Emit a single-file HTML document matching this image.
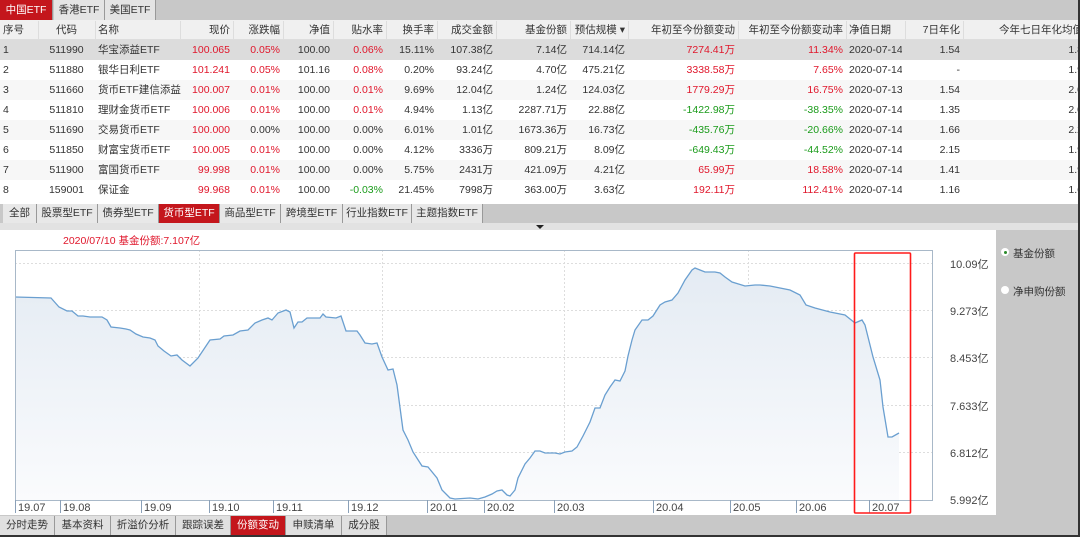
<!DOCTYPE html><html><head><meta charset="utf-8"><style>
*{margin:0;padding:0;box-sizing:border-box}
body{width:1080px;height:537px;overflow:hidden;background:#c8c8c8;font-family:"Liberation Sans","Noto Sans CJK SC",sans-serif;font-size:10.5px;color:#333;position:relative}
.a{position:absolute}
.tab{position:absolute;top:0;height:20px;line-height:20px;text-align:center;background:#e4e4e4;border-right:1px solid #999;font-size:10.5px}
.hdr{position:absolute;top:20px;left:0;width:1080px;height:20px;background:#f0f0f0;border-bottom:1px solid #ddd}
.c{position:absolute;height:20px;line-height:20px;white-space:nowrap;overflow:hidden}
.r{color:#e0162b}.g{color:#1a9b1a}
.row{position:absolute;left:0;width:1080px;height:20px}
.t2{position:absolute;top:204px;height:19px;line-height:19px;text-align:center;background:#e8e8e8;border-right:1px solid #999;font-size:10.5px}
.t3{position:absolute;top:516px;height:19px;line-height:19px;text-align:center;background:#e0e0e0;border-right:1px solid #999;font-size:10.5px}
.sel{background:#c4161c!important;color:#fff}
</style></head><body>
<div class="tab sel" style="left:0;width:53px">中国ETF</div>
<div class="tab" style="left:54px;width:51px">香港ETF</div>
<div class="tab" style="left:105px;width:51px">美国ETF</div>
<div class="hdr"></div>
<div class="a" style="left:0;top:40px;width:1080px;height:164px;background:#fff"></div>
<div class="row" style="top:40px;background:#dcdcdc"></div>
<div class="row" style="top:80px;background:#f7f7f7"></div>
<div class="row" style="top:120px;background:#f7f7f7"></div>
<div class="row" style="top:160px;background:#f7f7f7"></div>
<div id="tbl"></div>
<div class="a" style="left:0;top:204px;width:1080px;height:19px;background:#c8c8c8"></div>
<div class="a" style="left:0;top:223px;width:1080px;height:7px;background:#e2e2e2"></div>
<div class="a" style="left:536px;top:225px;width:0;height:0;border-left:4px solid transparent;border-right:4px solid transparent;border-top:4px solid #222"></div>
<div class="t2" style="left:3px;width:34px">全部</div>
<div class="t2" style="left:37px;width:61px">股票型ETF</div>
<div class="t2" style="left:98px;width:61px">债券型ETF</div>
<div class="t2 sel" style="left:159px;width:61px">货币型ETF</div>
<div class="t2" style="left:220px;width:61px">商品型ETF</div>
<div class="t2" style="left:281px;width:62px">跨境型ETF</div>
<div class="t2" style="left:343px;width:69px">行业指数ETF</div>
<div class="t2" style="left:412px;width:71px">主题指数ETF</div>
<div class="a" style="left:0;top:230px;width:996px;height:285px;background:#fff"></div>
<div class="a r" style="left:63px;top:233px;font-size:10.5px">2020/07/10 基金份额:7.107亿</div>
<svg class="a" style="left:0;top:230px" width="996" height="285" viewBox="0 230 996 285">
<defs><linearGradient id="gf" x1="0" y1="0" x2="0" y2="1"><stop offset="0" stop-color="#e4ebf3"/><stop offset="1" stop-color="#fafbfd"/></linearGradient></defs>
<g stroke="#ddd" stroke-dasharray="2,2" stroke-width="1">
<line x1="15" y1="263.5" x2="932" y2="263.5"/><line x1="15" y1="310.5" x2="932" y2="310.5"/><line x1="15" y1="357.5" x2="932" y2="357.5"/><line x1="15" y1="405.5" x2="932" y2="405.5"/><line x1="15" y1="452.5" x2="932" y2="452.5"/>
<line x1="199.5" y1="250" x2="199.5" y2="500"/><line x1="382.5" y1="250" x2="382.5" y2="500"/><line x1="564.5" y1="250" x2="564.5" y2="500"/><line x1="748.5" y1="250" x2="748.5" y2="500"/>
</g>
<path fill="url(#gf)" d="M15,297 L51,298 59,307 67,311 72,311 78,316 83,316 90,317 102,317 107,320 111,327 120,328 126,329 130,330 136,334 143,337 150,338 155,340 158,346 164,351 171,356 177,355 182,360 190,366 198,358 210,340 220,339 224,336 233,335 240,331 248,330 255,323 262,320 268,318 272,320 278,313 286,310 290,312 294,328 298,322 302,322 307,318 312,318 320,318 323,314 326,317 336,318 341,316 346,331 353,331 357,331 360,335 365,343 372,344 377,343 382,357 388,370 393,369 397,385 403,430 408,440 413,452 422,466 428,467 437,478 442,490 450,498 455,499 470,498 478,499 485,497 492,494 497,491 502,490 507,495 510,496 515,490 518,478 525,464 530,458 535,451 540,451 545,453 555,453 560,454 565,452 572,451 577,447 583,436 590,422 595,408 600,408 605,395 610,387 615,380 620,381 625,371 628,356 632,340 635,330 642,320 648,320 653,316 660,305 665,302 672,300 678,293 685,280 692,270 695,268 700,270 705,272 715,272 720,273 725,277 732,282 745,286 755,285 760,285 770,286 790,290 800,295 806,305 815,308 830,312 845,315 855,323 862,320 865,325 873,357 880,380 883,407 888,437 892,437 899,433 L899,500 L15,500Z"/>
<path fill="none" stroke="#6a9fd0" stroke-width="1.3" d="M15,297 L51,298 59,307 67,311 72,311 78,316 83,316 90,317 102,317 107,320 111,327 120,328 126,329 130,330 136,334 143,337 150,338 155,340 158,346 164,351 171,356 177,355 182,360 190,366 198,358 210,340 220,339 224,336 233,335 240,331 248,330 255,323 262,320 268,318 272,320 278,313 286,310 290,312 294,328 298,322 302,322 307,318 312,318 320,318 323,314 326,317 336,318 341,316 346,331 353,331 357,331 360,335 365,343 372,344 377,343 382,357 388,370 393,369 397,385 403,430 408,440 413,452 422,466 428,467 437,478 442,490 450,498 455,499 470,498 478,499 485,497 492,494 497,491 502,490 507,495 510,496 515,490 518,478 525,464 530,458 535,451 540,451 545,453 555,453 560,454 565,452 572,451 577,447 583,436 590,422 595,408 600,408 605,395 610,387 615,380 620,381 625,371 628,356 632,340 635,330 642,320 648,320 653,316 660,305 665,302 672,300 678,293 685,280 692,270 695,268 700,270 705,272 715,272 720,273 725,277 732,282 745,286 755,285 760,285 770,286 790,290 800,295 806,305 815,308 830,312 845,315 855,323 862,320 865,325 873,357 880,380 883,407 888,437 892,437 899,433"/>
<rect x="15.5" y="250.5" width="917" height="250" fill="none" stroke="#a8b8c8"/>
<g stroke="#8aa0b8"><line x1="15.5" y1="500" x2="15.5" y2="513"/><line x1="60.5" y1="500" x2="60.5" y2="513"/><line x1="141.5" y1="500" x2="141.5" y2="513"/><line x1="209.5" y1="500" x2="209.5" y2="513"/><line x1="273.5" y1="500" x2="273.5" y2="513"/><line x1="348.5" y1="500" x2="348.5" y2="513"/><line x1="427.5" y1="500" x2="427.5" y2="513"/><line x1="484.5" y1="500" x2="484.5" y2="513"/><line x1="554.5" y1="500" x2="554.5" y2="513"/><line x1="653.5" y1="500" x2="653.5" y2="513"/><line x1="730.5" y1="500" x2="730.5" y2="513"/><line x1="796.5" y1="500" x2="796.5" y2="513"/><line x1="869.5" y1="500" x2="869.5" y2="513"/></g>
<g font-family="Liberation Sans" font-size="11" fill="#444">
<text x="18" y="511">19.07</text><text x="63" y="511">19.08</text><text x="144" y="511">19.09</text><text x="212" y="511">19.10</text><text x="276" y="511">19.11</text><text x="351" y="511">19.12</text><text x="430" y="511">20.01</text><text x="487" y="511">20.02</text><text x="557" y="511">20.03</text><text x="656" y="511">20.04</text><text x="733" y="511">20.05</text><text x="799" y="511">20.06</text><text x="872" y="511">20.07</text>
</g>
<g font-family="Liberation Sans,Noto Sans CJK SC" font-size="11" fill="#444">
<text x="950" y="268">10.09亿</text><text x="950" y="315">9.273亿</text><text x="950" y="362">8.453亿</text><text x="950" y="410">7.633亿</text><text x="950" y="457">6.812亿</text><text x="950" y="504">5.992亿</text>
</g>
<rect x="854.5" y="253" width="56" height="260" rx="1" fill="none" stroke="#ff1a1a" stroke-width="1.6"/>
</svg>
<div class="a" style="left:1001px;top:248px;width:8px;height:8px;border-radius:50%;background:#fff"></div>
<div class="a" style="left:1003.5px;top:250.5px;width:3px;height:3px;border-radius:50%;background:#2a8a2a"></div>
<div class="a" style="left:1013px;top:246px">基金份额</div>
<div class="a" style="left:1001px;top:286px;width:8px;height:8px;border-radius:50%;background:#fff"></div>
<div class="a" style="left:1013px;top:284px">净申购份额</div>
<div class="t3" style="left:0;width:55px">分时走势</div>
<div class="t3" style="left:55px;width:56px">基本资料</div>
<div class="t3" style="left:111px;width:65px">折溢价分析</div>
<div class="t3" style="left:176px;width:55px">跟踪误差</div>
<div class="t3 sel" style="left:231px;width:55px">份额变动</div>
<div class="t3" style="left:286px;width:56px">申赎清单</div>
<div class="t3" style="left:342px;width:45px">成分股</div>
<div class="a" style="left:0;top:535px;width:1080px;height:2px;background:#333"></div>
<div class="a" style="left:1078px;top:0;width:2px;height:537px;background:#333"></div>
<script>
var cols=[[0,38,'l'],[38,95,'c'],[95,180,'l'],[180,233,'r'],[233,283,'r'],[283,333,'r'],[333,386,'r'],[386,437,'r'],[437,496,'r'],[496,570,'r'],[570,628,'r'],[628,738,'r'],[738,846,'r'],[846,905,'l'],[905,963,'r'],[963,1086,'r']];
var H=['序号','代码','名称','现价','涨跌幅','净值','贴水率','换手率','成交金额','基金份额','预估规模 ▾','年初至今份额变动','年初至今份额变动率','净值日期','7日年化','今年七日年化均值'];
var D=[
['1','511990','华宝添益ETF','r100.065','r0.05%','100.00','r0.06%','15.11%','107.38亿','7.14亿','714.14亿','r7274.41万','r11.34%','2020-07-14','1.54','1.8'],
['2','511880','银华日利ETF','r101.241','r0.05%','101.16','r0.08%','0.20%','93.24亿','4.70亿','475.21亿','r3338.58万','r7.65%','2020-07-14','-','1.9'],
['3','511660','货币ETF建信添益','r100.007','r0.01%','100.00','r0.01%','9.69%','12.04亿','1.24亿','124.03亿','r1779.29万','r16.75%','2020-07-13','1.54','2.0'],
['4','511810','理财金货币ETF','r100.006','r0.01%','100.00','r0.01%','4.94%','1.13亿','2287.71万','22.88亿','g-1422.98万','g-38.35%','2020-07-14','1.35','2.0'],
['5','511690','交易货币ETF','r100.000','0.00%','100.00','0.00%','6.01%','1.01亿','1673.36万','16.73亿','g-435.76万','g-20.66%','2020-07-14','1.66','2.2'],
['6','511850','财富宝货币ETF','r100.005','r0.01%','100.00','0.00%','4.12%','3336万','809.21万','8.09亿','g-649.43万','g-44.52%','2020-07-14','2.15','1.9'],
['7','511900','富国货币ETF','r99.998','r0.01%','100.00','0.00%','5.75%','2431万','421.09万','4.21亿','r65.99万','r18.58%','2020-07-14','1.41','1.9'],
['8','159001','保证金','r99.968','r0.01%','100.00','g-0.03%','21.45%','7998万','363.00万','3.63亿','r192.11万','r112.41%','2020-07-14','1.16','1.6']];
var h='';
function cell(t,y,i){var c=cols[i],cl='';if(/^[rg][-0-9]/.test(t)){cl=t[0];t=t.slice(1);}
var s='left:'+(c[0]+3)+'px;top:'+y+'px;width:'+(c[1]-c[0]-6+(i==2?6:0))+'px;text-align:'+(c[2]=='l'?'left':c[2]=='c'?'center':'right');
return '<div class="c '+cl+'" style="'+s+'">'+t+'</div>';}
H.forEach(function(t,i){h+=cell(t,20,i);if(i>0)h+='<div class="a" style="left:'+cols[i][0]+'px;top:21px;width:1px;height:18px;background:#ddd"></div>';});
D.forEach(function(r,j){r.forEach(function(t,i){h+=cell(t,40+j*20,i);});});
document.getElementById('tbl').innerHTML=h;
</script>
</body></html>
